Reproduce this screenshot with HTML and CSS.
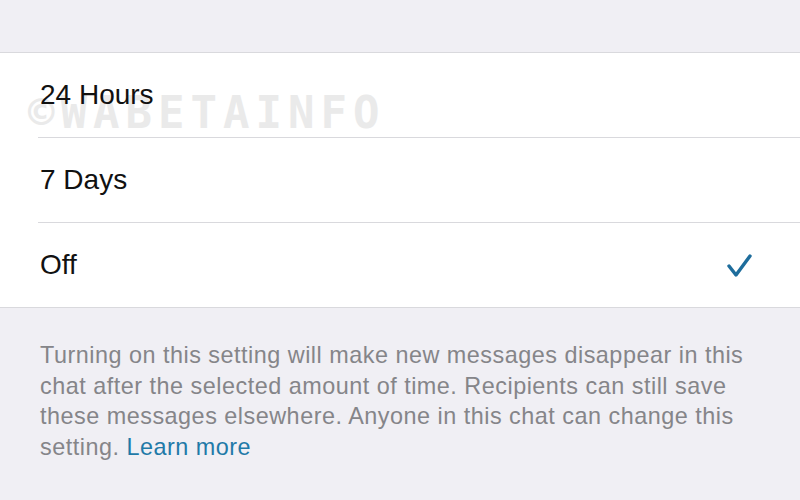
FILE: index.html
```html
<!DOCTYPE html>
<html lang="en">
<head>
  <meta charset="UTF-8" />
  <title>Disappearing Messages</title>
  <link rel="stylesheet" href="styles.css">
</head>
<body>
  <div class="top-space"></div>
  <div class="options">
    <div class="watermark" aria-hidden="true">©WABETAINFO</div>
    <div class="option"><span class="label">24 Hours</span></div>
    <div class="option"><span class="label">7 Days</span></div>
    <div class="option selected">
      <span class="label">Off</span>
      <svg class="check" width="28" height="26" viewBox="0 0 28 26">
        <path d="M3 13 L10 22 L24 3" fill="none" stroke="#1e6d9c" stroke-width="3.4" stroke-linecap="round" stroke-linejoin="round"/>
      </svg>
    </div>
  </div>
  <p class="note">
    Turning on this setting will make new messages disappear in this chat after the selected amount of time. Recipients can still save these messages elsewhere. Anyone in this chat can change this setting. <a href="#">Learn more</a>
  </p>
</body>
</html>
```

FILE: styles.css
```css
:root {
  --bg: #f0eff4;
  --line: #d9d9dd;
  --text: #111;
  --muted: #858589;
  --accent: #1f7aa8;
}
body {
  margin: 0;
  background: var(--bg);
  font-family: 'Liberation Sans', Arial, sans-serif;
  color: var(--text);
  overflow: hidden;
}
.top-space {
  height: 52px;
}
.options {
  position: relative;
  background: #fff;
  border-top: 1px solid var(--line);
  border-bottom: 1px solid var(--line);
  padding-left: 38px;
}
.watermark {
  position: absolute;
  left: 28px;
  top: 38px;
  font-family: 'DejaVu Sans Mono', monospace;
  font-weight: bold;
  font-size: 44px;
  letter-spacing: 6px;
  color: #eaeaea;
  line-height: 1;
  pointer-events: none;
}
.label {
  position: relative;
}
.option {
  position: relative;
  height: 84px;
  display: flex;
  align-items: center;
  justify-content: space-between;
  padding-left: 2px;
  padding-right: 46px;
  border-bottom: 1px solid var(--line);
  font-size: 28px;
}
.option:last-child {
  border-bottom: none;
}
.check {
  margin-top: 2px;
}
.note {
  margin: 0;
  padding: 32px 40px 0 40px;
  width: 745px;
  font-size: 23.4px;
  line-height: 30.5px;
  letter-spacing: 0.5px;
  color: var(--muted);
}
.note a {
  color: var(--accent);
  text-decoration: none;
}
```
